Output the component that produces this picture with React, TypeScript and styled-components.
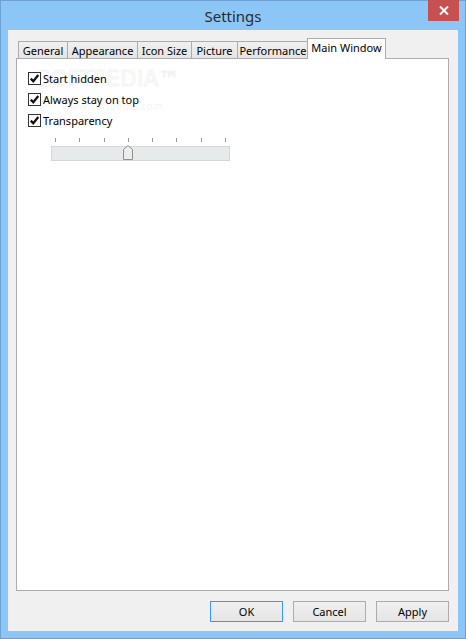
import React from "react";
import styled, { createGlobalStyle } from "styled-components";

const Global = createGlobalStyle`
  html, body { margin: 0; padding: 0; background: #8cc6f7; }
  * { box-sizing: border-box; }
`;

const Window = styled.div`
  width: 466px;
  height: 639px;
  background: #8cc6f7;
  border: 1px solid #6ea1d3;
  display: flex;
  flex-direction: column;
  font-family: "Noto Sans", "Open Sans", sans-serif;
  font-size: 11px;
  color: #000;
`;

const TitleBar = styled.div`
  height: 30px;
  display: grid;
  grid-template-columns: 1fr auto 1fr;
  align-items: start;
  margin-top: -1px;
`;

const Title = styled.div`
  grid-column: 2;
  font-size: 15px;
  line-height: 32px;
  color: #2b2b2b;
  font-family: "Noto Sans", "Open Sans", sans-serif;
`;

const CloseButton = styled.div`
  grid-column: 3;
  justify-self: end;
  margin-right: 6px;
  width: 31px;
  height: 21px;
  background: #c75050;
  display: flex;
  align-items: center;
  justify-content: center;
`;

const Client = styled.div`
  flex: 1;
  margin: 0 7px 7px 7px;
  background: #f0f0f0;
  display: flex;
  flex-direction: column;
  padding: 8px 9px 9px 8px;
`;

const TabStrip = styled.div`
  display: flex;
  align-items: flex-end;
  height: 21px;
  padding-left: 2px;
  position: relative;
  z-index: 1;
  margin-bottom: -1px;
`;

const Tab = styled.div<{ $w: number; $active?: boolean }>`
  width: ${(p) => p.$w}px;
  height: ${(p) => (p.$active ? 21 : 18)}px;
  margin-left: ${(p) => (p.$active ? -2 : -1)}px;
  margin-right: ${(p) => (p.$active ? -2 : 0)}px;
  border: 1px solid #acacac;
  border-bottom: ${(p) => (p.$active ? "none" : "1px solid #acacac")};
  background: ${(p) =>
    p.$active ? "#ffffff" : "linear-gradient(#f0f0f0, #e5e5e5)"};
  display: flex;
  align-items: center;
  justify-content: center;
  padding-bottom: ${(p) => (p.$active ? 3 : 0)}px;
  color: #000;
  font-size: 11px;
  white-space: nowrap;
  position: relative;
  z-index: ${(p) => (p.$active ? 2 : 1)};
  &:first-child { margin-left: 0; }
`;

const Panel = styled.div`
  flex: 1;
  background: #fff;
  border: 1px solid #acacac;
  padding: 9px 11px;
  position: relative;
`;

const Watermark = styled.div`
  position: absolute;
  left: 20px;
  top: 8px;
  font-family: "DejaVu Sans", sans-serif;
  font-size: 21px;
  letter-spacing: 0.5px;
  color: transparent;
  -webkit-text-stroke: 1px #f2f2f2;
  pointer-events: none;
`;

const WatermarkUrl = styled.div`
  position: absolute;
  left: 45px;
  top: 40px;
  font-size: 10px;
  color: #f4f4f4;
  letter-spacing: 0.5px;
  pointer-events: none;
`;

const Row = styled.div`
  height: 21px;
  display: flex;
  align-items: center;
  gap: 2px;
  position: relative;
`;

const Box = styled.div`
  width: 13px;
  height: 13px;
  border: 1px solid #333;
  background: #fff;
  display: flex;
  align-items: center;
  justify-content: center;
`;

const Label = styled.span`
  font-size: 11px;
  color: #000;
`;

const SliderWrap = styled.div`
  width: 179px;
  margin: 7px 0 0 23px;
  position: relative;
`;

const Ticks = styled.div`
  display: flex;
  justify-content: space-between;
  padding: 0 4px;
  height: 4px;
`;

const Tick = styled.div`
  width: 1px;
  height: 4px;
  background: #9a9a9a;
`;

const Track = styled.div`
  margin-top: 4px;
  height: 15px;
  background: #e7eaea;
  border: 1px solid #d6d6d6;
  position: relative;
`;

const Thumb = styled.svg`
  position: absolute;
  top: -2px;
  width: 10px;
  height: 15px;
`;

const ButtonRow = styled.div`
  display: flex;
  justify-content: flex-end;
  gap: 10px;
  margin-top: 10px;
`;

const Button = styled.div<{ $default?: boolean }>`
  width: 73px;
  height: 21px;
  border: 1px solid ${(p) => (p.$default ? "#3399ff" : "#acacac")};
  background: linear-gradient(#f0f0f0, #e5e5e5);
  display: flex;
  align-items: center;
  justify-content: center;
  font-size: 11px;
  color: #000;
`;

const tabs = [
  { label: "General", w: 50 },
  { label: "Appearance", w: 71 },
  { label: "Icon Size", w: 55 },
  { label: "Picture", w: 47 },
  { label: "Performance", w: 72 },
  { label: "Main Window", w: 79, active: true },
];

const checks = ["Start hidden", "Always stay on top", "Transparency"];

const Check = () => (
  <Box>
    <svg width="11" height="11" viewBox="0 0 11 11">
      <path d="M1.8 5.6 L4.3 8.2 L9.3 2" fill="none" stroke="#111" strokeWidth="2.3" />
    </svg>
  </Box>
);

export default function App() {
  const ticks = 8;
  const value = 3;
  const thumbLeft = 4 + (value * 171) / (ticks - 1) - 5 - 1;
  return (
    <>
      <Global />
      <Window>
        <TitleBar>
          <Title>Settings</Title>
          <CloseButton>
            <svg width="10" height="9" viewBox="0 0 10 9">
              <path d="M1 0.5 L9 8.5 M9 0.5 L1 8.5" stroke="#fff" strokeWidth="2" />
            </svg>
          </CloseButton>
        </TitleBar>
        <Client>
          <TabStrip>
            {tabs.map((t) => (
              <Tab key={t.label} $w={t.w} $active={t.active}>
                {t.label}
              </Tab>
            ))}
          </TabStrip>
          <Panel>
            <Watermark>SOFTPEDIA™</Watermark>
            <WatermarkUrl>www.softpedia.com</WatermarkUrl>
            {checks.map((c) => (
              <Row key={c}>
                <Check />
                <Label>{c}</Label>
              </Row>
            ))}
            <SliderWrap>
              <Ticks>
                {Array.from({ length: ticks }).map((_, i) => (
                  <Tick key={i} />
                ))}
              </Ticks>
              <Track>
                <Thumb viewBox="0 0 10 15" style={{ left: thumbLeft }}>
                  <path
                    d="M0.5 14.5 V4.5 L5 0.5 L9.5 4.5 V14.5 Z"
                    fill="#ececec"
                    stroke="#8e8e8e"
                  />
                </Thumb>
              </Track>
            </SliderWrap>
          </Panel>
          <ButtonRow>
            <Button $default>OK</Button>
            <Button>Cancel</Button>
            <Button>Apply</Button>
          </ButtonRow>
        </Client>
      </Window>
    </>
  );
}
